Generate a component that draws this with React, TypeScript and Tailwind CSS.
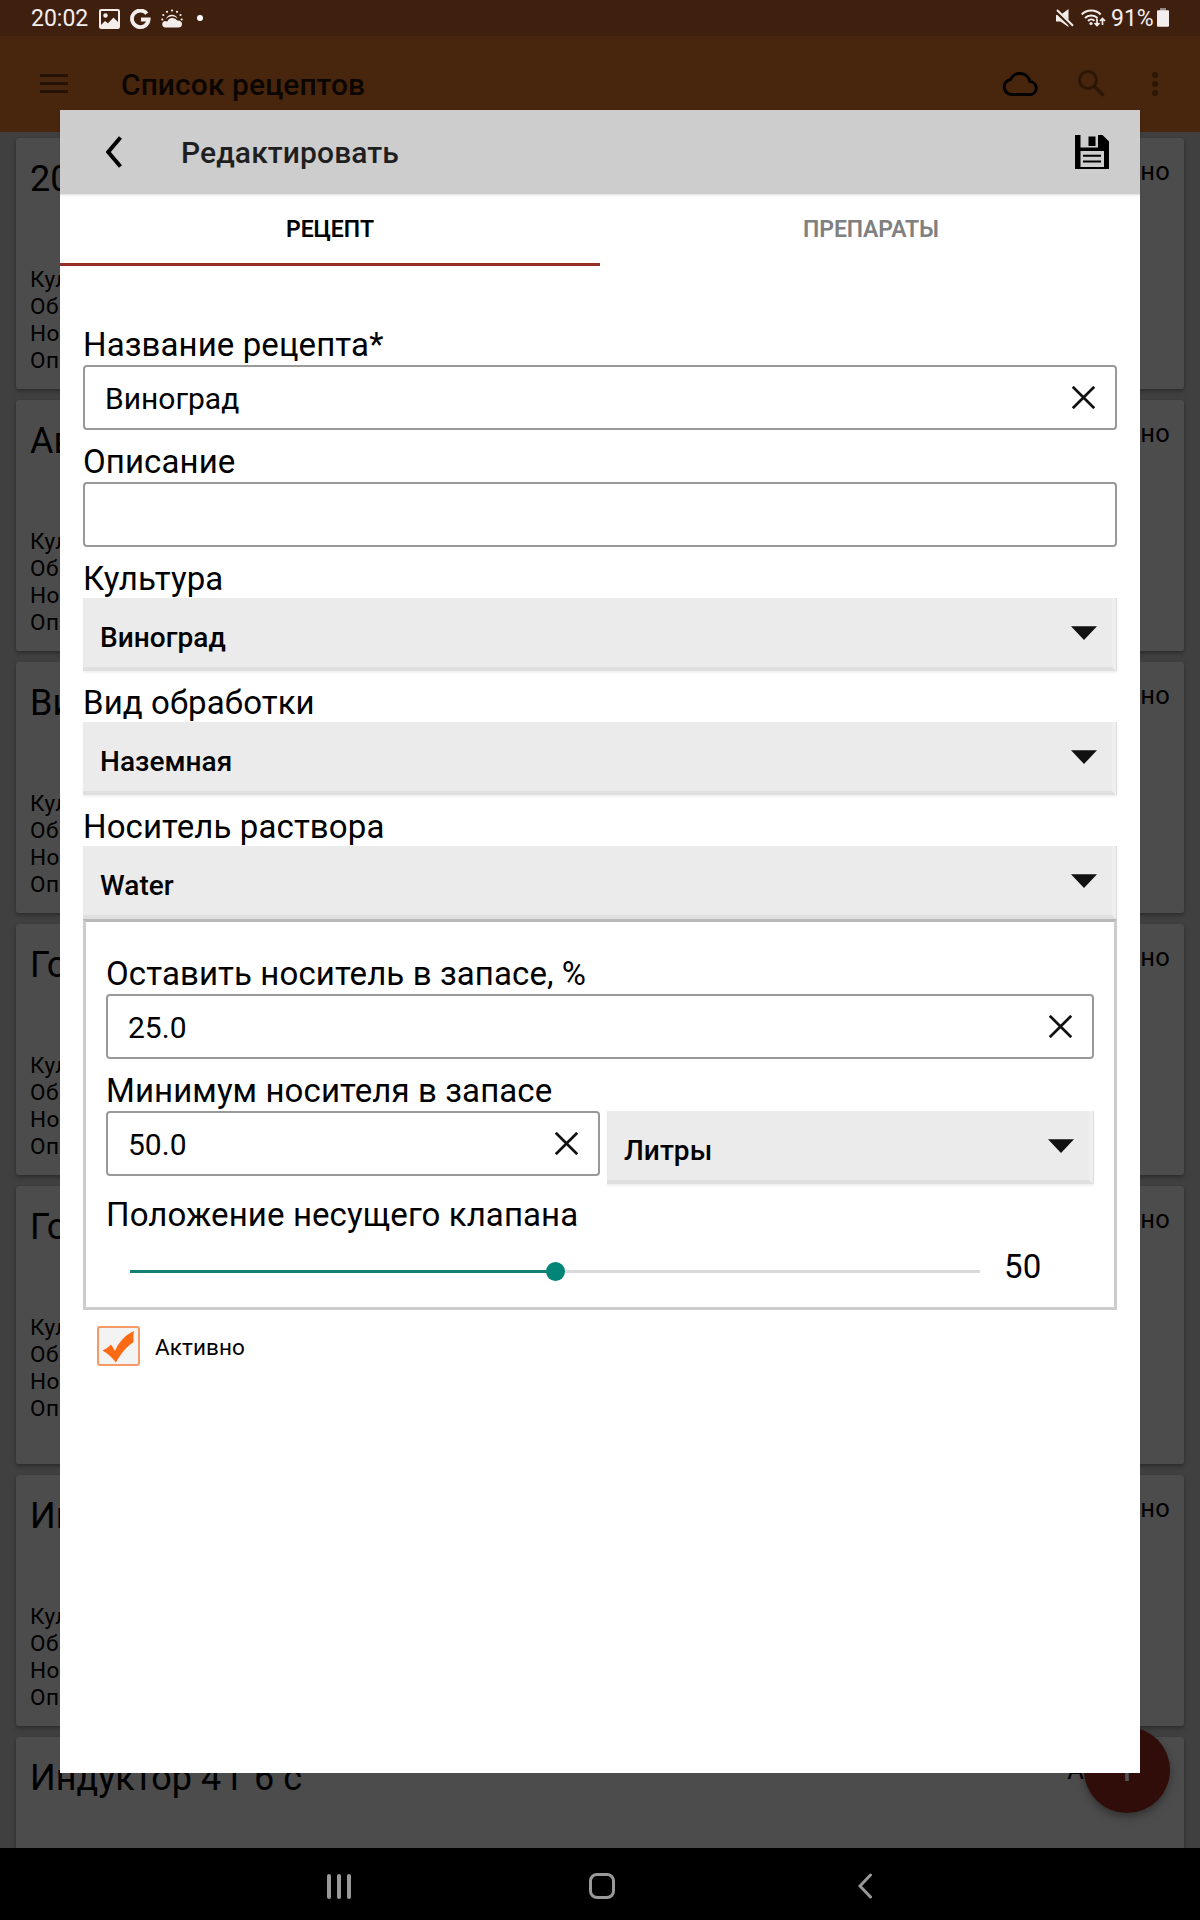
import React from 'react';

type Recipe = { title: string; tall?: boolean };

const recipes: Recipe[] = [
  { title: '2022 год' },
  { title: 'Август' },
  { title: 'Виноград' },
  { title: 'Горох' },
  { title: 'Горчица', tall: true },
  { title: 'Индуктор' },
  { title: 'Индуктор 4 г 6 с' },
];

function StatusBar() {
  return (
    <div className="flex h-9 items-center justify-between bg-[#3f200e] pl-[31px] pr-[31px] pt-0.5 text-[#f3eeec]">
      <div className="flex items-center">
        <span className="w-[67px] text-[23px] leading-[34px]">20:02</span>
        <svg className="ml-px" width="21" height="20" viewBox="0 0 21 20">
          <rect x="1" y="1" width="19" height="18" rx="1.2" fill="none" stroke="currentColor" strokeWidth="2" />
          <circle cx="6.5" cy="6.5" r="2.2" fill="currentColor" />
          <path d="M2 16l4-4 3 2.2 5.500-5.700 5 5V18H2z" fill="currentColor" />
        </svg>
        <svg className="ml-2.5" width="21" height="21" viewBox="0 0 22 22">
          <path d="M17.600 4.800A8.700 8.700 0 1 0 19.500 11H11.500" fill="none" stroke="currentColor" strokeWidth="4" />
        </svg>
        <svg className="ml-2.5" width="22" height="20" viewBox="0 0 22 20">
          <path d="M4 18.500a3.300 3.300 0 0 1 0-6.500c1 0 1.600.2 2.300.6A5.600 5.600 0 0 1 16.200 11.500c2.700-.3 4.800 1 4.800 3.500s-1.600 3.500-3.500 3.500z" fill="currentColor" />
          <path d="M5 10a6.200 6.200 0 0 1 11.500-.5A8 8 0 0 0 5 10z" fill="currentColor" />
          <g fill="currentColor">
            <circle cx="11" cy="1.500" r="1.100" /><circle cx="6" cy="2.800" r="1.100" /><circle cx="16" cy="2.800" r="1.100" />
            <circle cx="2.300" cy="6" r="1.100" /><circle cx="19.500" cy="6" r="1.100" /><circle cx="1.300" cy="10.500" r="1.100" /><circle cx="20.700" cy="10.500" r="1.100" />
          </g>
        </svg>
        <span className="-mt-0.5 ml-[14px] size-1.5 rounded-full bg-white" />
      </div>
      <div className="flex items-center">
        <svg className="-mt-0.5" width="18" height="19" viewBox="0 0 18 19">
          <path d="M0 6h4.500l8-6v18l-8-5.500H0z" fill="currentColor" />
          <path d="M-.5 1.500l18 17" stroke="#3f200e" strokeWidth="4" />
          <path d="M1 1l16 15.800" stroke="currentColor" strokeWidth="2" />
        </svg>
        <svg className="-mt-0.5 ml-[7px]" width="25" height="20" viewBox="0 0 25 20">
          <g fill="none" stroke="currentColor" strokeWidth="2">
            <path d="M.7 6.500a13.500 13.500 0 0 1 19 0M4 10a8.800 8.800 0 0 1 12.500 0M7 13a4.600 4.600 0 0 1 6.500-.2" />
            <path d="M16 10.500v7M13.500 15l2.500 2.600 2.500-2.600M21.500 17v-6.500M19 13l2.500-2.600L24 13" strokeWidth="1.700" />
          </g>
          <circle cx="10" cy="15.500" r="1.600" fill="currentColor" />
        </svg>
        <span className="ml-[5px] w-[46px] text-[23px] leading-[34px]">91%</span>
        <svg className="-mt-[3px]" width="12" height="19" viewBox="0 0 12 19">
          <rect x="3" width="6" height="3" fill="#96877e" />
          <rect y="2.300" width="12" height="16.500" rx="1" fill="currentColor" />
        </svg>
      </div>
    </div>
  );
}

function AppBar() {
  return (
    <div className="flex h-24 items-start bg-[#48250d] pl-10">
      <div className="mt-[38px] flex h-[19px] w-7 flex-col justify-between">
        <span className="h-[3px] bg-[#241205]" />
        <span className="h-[3px] bg-[#241205]" />
        <span className="h-[3px] bg-[#241205]" />
      </div>
      <span className="ml-[53px] mt-[29px] text-[30px] leading-[40px] font-medium tracking-[0.07px] text-[#0c0602]">
        Список рецептов
      </span>
      <svg className="ml-auto mt-9" width="36" height="24" viewBox="0 0 36 24">
        <path d="M9.500 22.500a7.600 7.600 0 0 1-.9-15.100A10.300 10.300 0 0 1 28 9.600a6.500 6.500 0 0 1 .8 12.900z" fill="none" stroke="#000" strokeWidth="3" />
      </svg>
      <svg className="ml-10 mt-[34px]" width="27" height="27" viewBox="0 0 27 27" fill="none" stroke="#2c1707">
        <circle cx="10" cy="10" r="8.500" strokeWidth="3" />
        <path d="M16 16l9.500 9.500" strokeWidth="3.600" />
      </svg>
      <div className="ml-[47px] mr-[42px] mt-9 flex flex-col gap-[3px]">
        <span className="size-1.5 rounded-full bg-[#2c1707]" />
        <span className="size-1.5 rounded-full bg-[#2c1707]" />
        <span className="size-1.5 rounded-full bg-[#2c1707]" />
      </div>
    </div>
  );
}

function RecipeCard({ title, tall }: Recipe) {
  return (
    <div
      className={`${tall ? 'h-[278px]' : 'h-[251px]'} shrink-0 rounded-[3px] bg-[#4c4c4c] px-[14px] text-black shadow-[0_2px_4px_rgba(0,0,0,0.35)]`}
    >
      <div className="flex justify-between">
        <span className="mt-[20px] text-[36px] leading-[42px]">{title}</span>
        <span className="mt-[18px] text-[25.5px] leading-[30px] tracking-[0.2px]">Активно</span>
      </div>
      <div className="mt-[66px] text-[22.5px] leading-[27px] tracking-[0.5px]">
        <div>Культура:</div>
        <div>Обработка:</div>
        <div>Носитель:</div>
        <div>Описание:</div>
      </div>
    </div>
  );
}

function ClearIcon() {
  return (
    <svg className="mr-[20px]" width="23" height="23" viewBox="0 0 23 23">
      <path d="M.8.8l21.400 21.400M22.200.8L.8 22.200" stroke="#111" strokeWidth="2.700" />
    </svg>
  );
}

function Label({ children, short }: { children: React.ReactNode; short?: boolean }) {
  return (
    <div className={`${short ? 'h-[39px]' : 'h-10'} whitespace-nowrap text-[33px] leading-[40px] tracking-[0.1px] text-black`}>
      {children}
    </div>
  );
}

function TextBox({ value, clearable = true }: { value: string; clearable?: boolean }) {
  return (
    <div className="flex h-[65px] items-center justify-between rounded-[4px] border-2 border-[#999] bg-white pl-5">
      <span className="pt-[3px] text-[30px] leading-[40px]">{value}</span>
      {clearable && <ClearIcon />}
    </div>
  );
}

function Spinner({ value }: { value: string }) {
  return (
    <div className="h-[73px] border-r border-[#dedede] bg-[#ebebeb] shadow-[0_2px_2px_rgba(0,0,0,0.06)]">
      <div className="flex h-full items-start justify-between border-r-4 border-b-4 border-r-[#efefef] border-b-[#dfdfdf] pl-[17px]">
        <span className="mt-[20px] text-[28px] leading-[40px] font-medium tracking-[0.05px]">{value}</span>
        <svg className="mr-[14px] mt-[28px]" width="28" height="14" viewBox="0 0 28 14">
          <path d="M1 .3h26L14 14z" fill="#111" />
        </svg>
      </div>
    </div>
  );
}

function Slider({ value }: { value: number }) {
  return (
    <div className="mt-[21px] flex items-center pl-6">
      <div className="relative h-[3px] w-[850px] bg-[#dadada]">
        <div className="h-full bg-[#138072]" style={{ width: `${value}%` }} />
        <div className="absolute top-[-8px] -ml-[9px] size-[19px] rounded-full bg-[#008577]" style={{ left: `${value}%` }} />
      </div>
      <span className="-mt-[9px] ml-6 text-[33px] leading-[40px] tracking-[0.3px]">50</span>
    </div>
  );
}

function DialogHeader() {
  return (
    <div className="flex h-[84px] items-center bg-[#cdcdcd] shadow-[0_1px_2px_rgba(0,0,0,0.15)]">
      <svg className="ml-[46px]" width="16" height="32" viewBox="0 0 16 32">
        <path d="M14.500 1.500L2.200 16l12.300 14.500" fill="none" stroke="#000" strokeWidth="4" />
      </svg>
      <span className="ml-[59px] pt-0.5 text-[30px] leading-[40px] font-medium tracking-[0.1px] text-[#1f1f1f]">Редактировать</span>
      <svg className="ml-auto mr-[31px]" width="34" height="34" viewBox="0 0 34 34">
        <path fillRule="evenodd" d="M0 0h5.500v12.500H23V0h4.500L34 6.500V34H0zM5.500 16v16H29V16z" fill="#000" />
        <rect x="13.500" y="1.500" width="7" height="9.500" fill="#000" />
        <path d="M8 20.800h18M8 26.500h18" stroke="#000" strokeWidth="2" />
      </svg>
    </div>
  );
}

function Tabs() {
  return (
    <div className="flex h-[72px] text-center text-[23px] leading-[72px] font-semibold tracking-[-0.1px]">
      <div className="w-1/2 border-b-[3px] border-[#962f26] text-black">РЕЦЕПТ</div>
      <div className="w-1/2 pl-0.5 text-[#808080]">ПРЕПАРАТЫ</div>
    </div>
  );
}

function Dialog() {
  return (
    <div className="absolute left-[60px] top-[110px] h-[1663px] w-[1080px] bg-white">
      <DialogHeader />
      <Tabs />
      <div className="px-[23px] pt-[59px]">
        <div className="mb-3">
          <Label>Название рецепта*</Label>
          <TextBox value="Виноград" />
        </div>
        <div className="mb-3">
          <Label>Описание</Label>
          <TextBox value="" clearable={false} />
        </div>
        <div className="mb-3">
          <Label short>Культура</Label>
          <Spinner value="Виноград" />
        </div>
        <div className="mb-3">
          <Label short>Вид обработки</Label>
          <Spinner value="Наземная" />
        </div>
        <Label short>Носитель раствора</Label>
        <Spinner value="Water" />
        <div className="h-[391px] border-[3px] border-[#ccc] border-t-[#b9b9b9] px-5 pt-8">
          <Label>Оставить носитель в запасе, %</Label>
          <TextBox value="25.0" />
          <div className="h-3" />
          <Label>Минимум носителя в запасе</Label>
          <div className="flex h-[84px] items-start gap-[7px]">
            <div className="w-[494px]">
              <TextBox value="50.0" />
            </div>
            <div className="flex-1">
              <Spinner value="Литры" />
            </div>
          </div>
          <Label>Положение несущего клапана</Label>
          <Slider value={50} />
        </div>
        <div className="mt-4 flex items-center pl-[14px]">
          <svg width="43" height="40" viewBox="0 0 43 40">
            <rect x="1" y="1" width="41" height="38" rx="2" fill="#f3f3f3" stroke="#f59a66" strokeWidth="2" />
            <path d="M5.500 24.500q5-2 8.500-6 2 3 4 6.500C22 15.500 29 8.500 37 5c-.8 3.500-.8 8-.3 11C30 20 23.500 28 19 36.500 15 31.500 11 27.500 5.500 24.500z" fill="#fb6b14" />
          </svg>
          <span className="ml-[15px] pt-0.5 text-[22.5px] leading-[30px] tracking-[0.1px]">Активно</span>
        </div>
      </div>
    </div>
  );
}

function NavBar() {
  return (
    <div className="flex h-[72px] items-center bg-black pt-1 text-[#999]">
      <div className="ml-[327px] flex h-[25px] w-6 justify-between">
        <span className="w-1 rounded-full bg-[#999]" />
        <span className="w-1 rounded-full bg-[#999]" />
        <span className="w-1 rounded-full bg-[#999]" />
      </div>
      <div className="ml-[238px] h-[26px] w-[26px] rounded-[8px] border-[3px] border-[#999]" />
      <svg className="ml-[243px]" width="14" height="26" viewBox="0 0 14 26">
        <path d="M12.500 2L2 13l10.500 11" fill="none" stroke="currentColor" strokeWidth="3" strokeLinecap="round" />
      </svg>
    </div>
  );
}

export default function App() {
  return (
    <div
      className="relative flex h-[1920px] w-[1200px] flex-col overflow-hidden bg-[#404040]"
      style={{ fontFamily: 'Roboto, "Noto Sans", sans-serif' }}
    >
      <StatusBar />
      <AppBar />
      <div className="flex flex-1 flex-col gap-[11px] overflow-hidden px-4 pt-1.5">
        {recipes.map((r) => (
          <RecipeCard key={r.title} {...r} />
        ))}
      </div>
      <div className="absolute left-[1084px] top-[1727px] flex size-[86px] items-center justify-center rounded-full bg-[#300d09] shadow-[0_4px_8px_rgba(0,0,0,0.35)]">
        <svg width="22" height="22" viewBox="0 0 22 22">
          <path d="M11 0v22M0 11h22" stroke="#555" strokeWidth="3.500" />
        </svg>
      </div>
      <NavBar />
      <Dialog />
    </div>
  );
}
